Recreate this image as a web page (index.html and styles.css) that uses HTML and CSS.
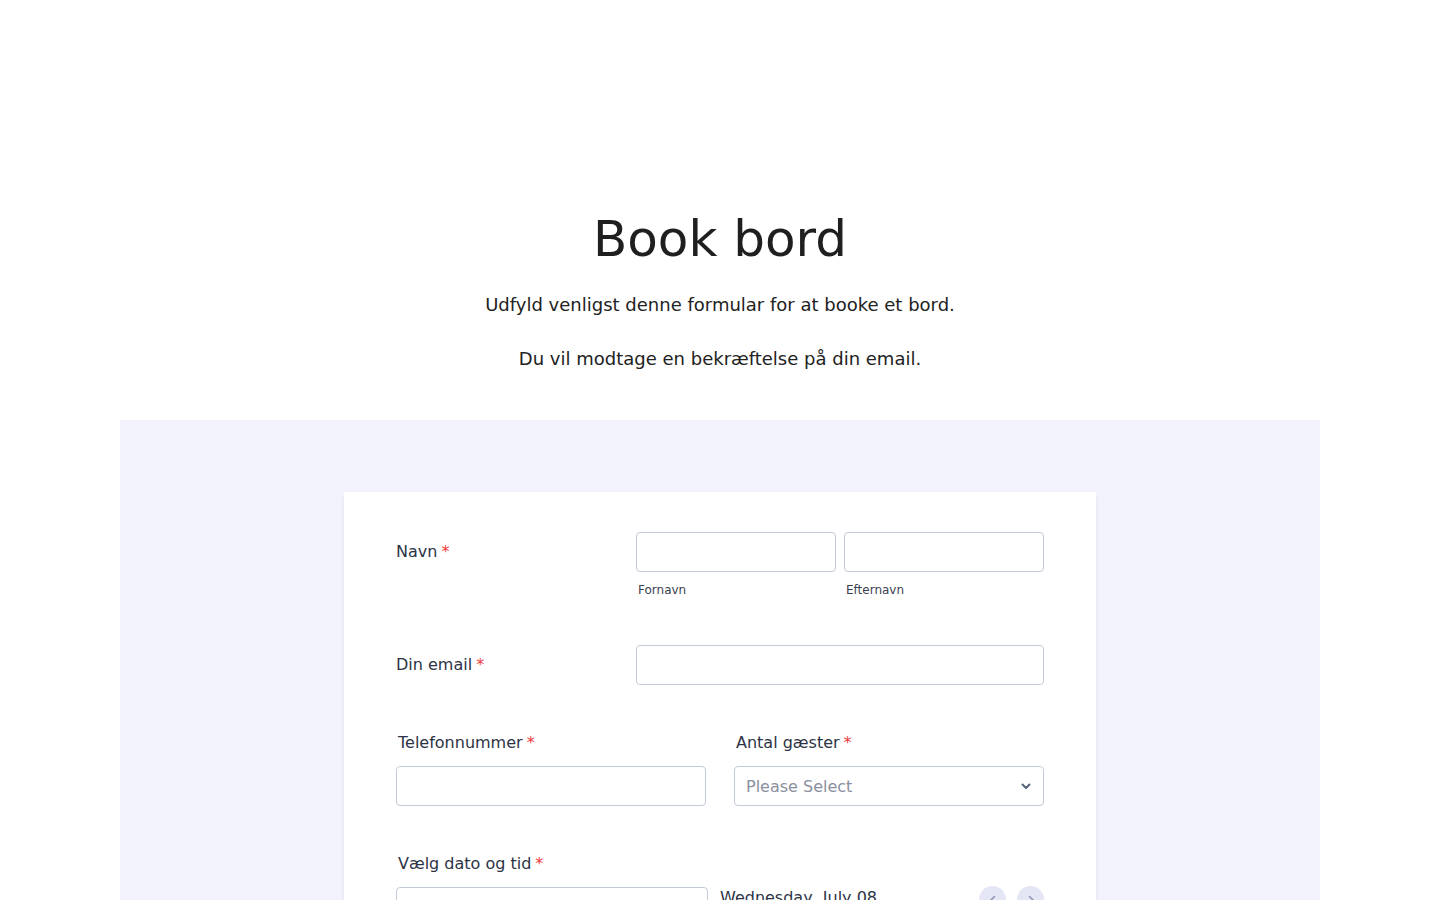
FILE: index.html
```html
<!DOCTYPE html>
<html lang="da">
<head>
<meta charset="utf-8">
<title>Book bord</title>
<link rel="stylesheet" href="styles.css">
</head>
<body>
<header class="intro">
  <h1 class="title">Book bord</h1>
  <p class="lead">Udfyld venligst denne formular for at booke et bord.</p>
  <p class="lead">Du vil modtage en bekræftelse på din email.</p>
</header>
<section class="backdrop">
  <form class="card">
    <div class="row row-side">
      <label class="label side">Navn<span class="req">*</span></label>
      <div class="pair">
        <div class="sub">
          <input class="input" type="text">
          <span class="sublabel">Fornavn</span>
        </div>
        <div class="sub">
          <input class="input" type="text">
          <span class="sublabel">Efternavn</span>
        </div>
      </div>
    </div>
    <div class="row row-side">
      <label class="label side">Din email<span class="req">*</span></label>
      <div class="wide"><input class="input" type="email"></div>
    </div>
    <div class="row row-cols">
      <div class="col">
        <label class="label top">Telefonnummer<span class="req">*</span></label>
        <input class="input" type="tel">
      </div>
      <div class="col">
        <label class="label top">Antal gæster<span class="req">*</span></label>
        <div class="select">
          <span class="placeholder">Please Select</span>
          <svg class="chev" width="10" height="7" viewBox="0 0 10 7"><path d="M1.5 1.5 L5 5 L8.5 1.5" fill="none" stroke="#57647e" stroke-width="2" stroke-linecap="round" stroke-linejoin="round"/></svg>
        </div>
      </div>
    </div>
    <div class="row">
      <label class="label top">Vælg dato og tid<span class="req">*</span></label>
      <div class="date-row">
        <input class="input date-input" type="text">
        <span class="date-text">Wednesday, July 08</span>
        <div class="navs">
          <span class="nav"><svg width="10" height="10" viewBox="0 0 10 10"><path d="M6.5 1.5 L3 5 L6.5 8.5" fill="none" stroke="#8f96b3" stroke-width="1.6" stroke-linecap="round"/></svg></span>
          <span class="nav"><svg width="10" height="10" viewBox="0 0 10 10"><path d="M3.5 1.5 L7 5 L3.5 8.5" fill="none" stroke="#8f96b3" stroke-width="1.6" stroke-linecap="round"/></svg></span>
        </div>
      </div>
      <div class="calendar"></div>
    </div>
  </form>
</section>
</body>
</html>
```
FILE: styles.css
```css
* { box-sizing: border-box; }
html, body { margin: 0; padding: 0; background: #ffffff; }
body {
  font-family: "DejaVu Sans", "Liberation Sans", sans-serif;
  color: #222222;
}
.intro {
  padding-top: 210px;
  text-align: center;
}
.title {
  margin: 0;
  font-size: 50px;
  line-height: 58px;
  font-weight: normal;
  color: #1f1f1f;
}
.lead {
  margin: 0;
  font-size: 18px;
  line-height: 54px;
  color: #222222;
}
.intro .title + .lead { margin-top: 10px; }
.backdrop {
  width: 1200px;
  margin: 34px auto 0;
  background: #f3f3fe;
  padding: 72px 0 0;
}
.card {
  width: 752px;
  margin: 0 auto;
  background: #ffffff;
  padding: 40px 52px 200px;
  box-shadow: 0 4px 4px rgba(87, 100, 126, 0.12);
}
.row + .row { margin-top: 47px; }
.row-side { display: flex; }
.label {
  display: block;
  font-size: 16px;
  color: #2c3345;
}
.label.side { width: 240px; line-height: 40px; }
.label.top { line-height: 20px; padding-left: 2px; padding-top: 1px; margin-bottom: 13px; }
.req { color: #f23a3c; margin-left: 4px; }
.pair { display: flex; gap: 8px; }
.sub { width: 200px; display: flex; flex-direction: column; }
.sublabel {
  margin-top: 10px;
  padding-left: 2px;
  font-size: 12px;
  line-height: 16px;
  color: #3a4150;
}
.input {
  display: block;
  width: 100%;
  height: 40px;
  border: 1px solid #c3cad8;
  border-radius: 4px;
  background: #ffffff;
  font: inherit;
  padding: 0 10px;
  margin: 0;
}
.wide { width: 408px; }
.row-cols { display: flex; gap: 28px; }
.col { width: 310px; }
.select {
  height: 40px;
  border: 1px solid #c3cad8;
  border-radius: 4px;
  display: flex;
  align-items: center;
  justify-content: space-between;
  padding: 0 12px 0 11px;
}
.placeholder { font-size: 16px; color: #8b90a0; }
.date-row { display: flex; align-items: flex-start; }
.date-input { width: 312px; flex: none; }
.date-text {
  margin-left: 12px;
  margin-top: 1px;
  font-size: 16px;
  line-height: 20px;
  color: #2c3345;
}
.navs { margin-left: auto; display: flex; gap: 11px; margin-top: -1px; }
.nav {
  width: 27px;
  height: 27px;
  border-radius: 50%;
  background: #e4e6f5;
  display: flex;
  align-items: center;
  justify-content: center;
}
.calendar { height: 260px; }
```
